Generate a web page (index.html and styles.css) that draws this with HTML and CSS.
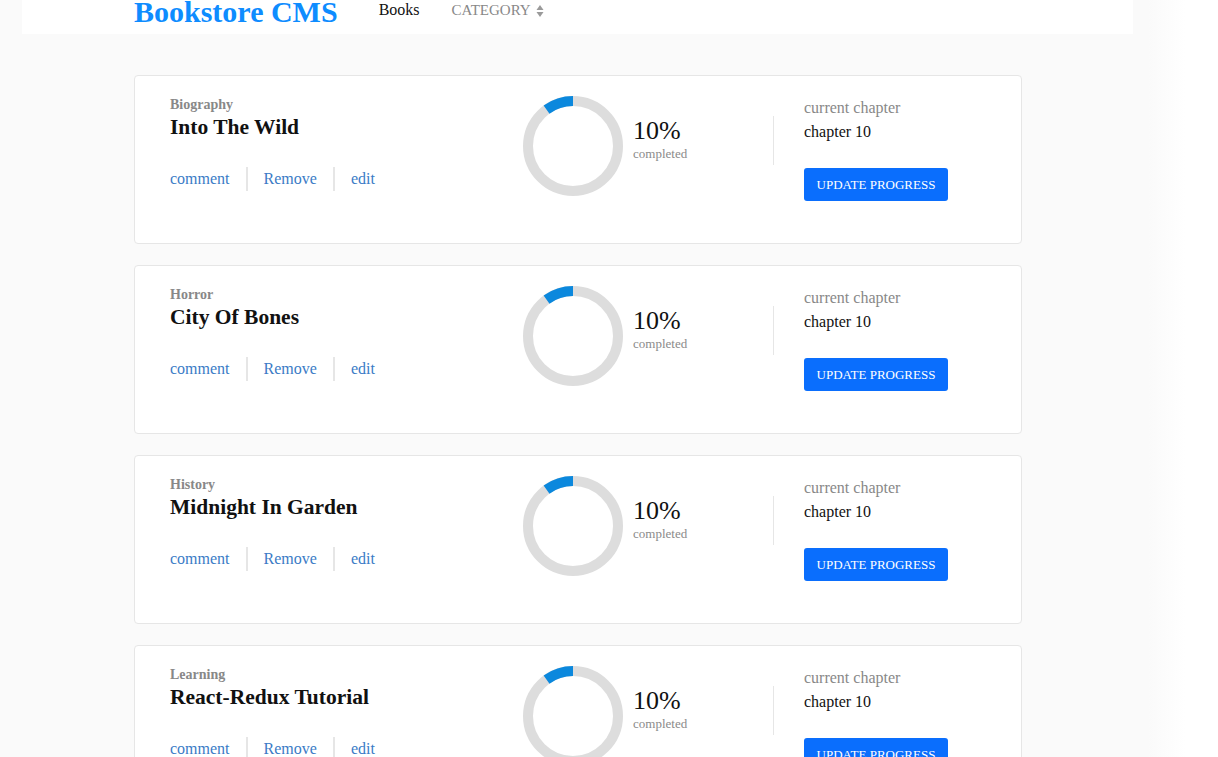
FILE: index.html
```html
<!DOCTYPE html>
<html lang="en">
<head>
<meta charset="utf-8">
<title>Bookstore CMS</title>
<link rel="stylesheet" href="styles.css">
</head>
<body>
<div class="page">
  <header class="header">
    <div class="logo">Bookstore CMS</div>
    <nav class="nav">
      <a class="nav-books">Books</a>
      <span class="nav-category">CATEGORY
        <svg class="sort" width="8" height="14" viewBox="0 0 8 14"><path d="M4 1 L7.5 6 L0.5 6 Z" fill="#9a9a9a"/><path d="M4 13 L7.5 8 L0.5 8 Z" fill="#9a9a9a"/></svg>
      </span>
    </nav>
  </header>

  <main class="books">
    <div class="card">
      <div class="info">
        <div class="category">Biography</div>
        <div class="title">Into The Wild</div>
        <div class="actions"><a class="act first">comment</a><a class="act">Remove</a><a class="act">edit</a></div>
      </div>
      <div class="progress">
        <svg class="ring" width="100" height="100" viewBox="0 0 100 100"><circle cx="50" cy="50" r="45" fill="none" stroke="#dddddd" stroke-width="10"/><path d="M50 5 A45 45 0 0 0 23.55 13.59" fill="none" stroke="#0b88dd" stroke-width="10"/></svg>
        <div class="pct"><div class="pct-num">10%</div><div class="pct-label">completed</div></div>
      </div>
      <div class="divider"></div>
      <div class="chapter">
        <div class="ch-label">current chapter</div>
        <div class="ch-value">chapter 10</div>
        <button class="update">UPDATE PROGRESS</button>
      </div>
    </div>

    <div class="card">
      <div class="info">
        <div class="category">Horror</div>
        <div class="title">City Of Bones</div>
        <div class="actions"><a class="act first">comment</a><a class="act">Remove</a><a class="act">edit</a></div>
      </div>
      <div class="progress">
        <svg class="ring" width="100" height="100" viewBox="0 0 100 100"><circle cx="50" cy="50" r="45" fill="none" stroke="#dddddd" stroke-width="10"/><path d="M50 5 A45 45 0 0 0 23.55 13.59" fill="none" stroke="#0b88dd" stroke-width="10"/></svg>
        <div class="pct"><div class="pct-num">10%</div><div class="pct-label">completed</div></div>
      </div>
      <div class="divider"></div>
      <div class="chapter">
        <div class="ch-label">current chapter</div>
        <div class="ch-value">chapter 10</div>
        <button class="update">UPDATE PROGRESS</button>
      </div>
    </div>

    <div class="card">
      <div class="info">
        <div class="category">History</div>
        <div class="title">Midnight In Garden</div>
        <div class="actions"><a class="act first">comment</a><a class="act">Remove</a><a class="act">edit</a></div>
      </div>
      <div class="progress">
        <svg class="ring" width="100" height="100" viewBox="0 0 100 100"><circle cx="50" cy="50" r="45" fill="none" stroke="#dddddd" stroke-width="10"/><path d="M50 5 A45 45 0 0 0 23.55 13.59" fill="none" stroke="#0b88dd" stroke-width="10"/></svg>
        <div class="pct"><div class="pct-num">10%</div><div class="pct-label">completed</div></div>
      </div>
      <div class="divider"></div>
      <div class="chapter">
        <div class="ch-label">current chapter</div>
        <div class="ch-value">chapter 10</div>
        <button class="update">UPDATE PROGRESS</button>
      </div>
    </div>

    <div class="card">
      <div class="info">
        <div class="category">Learning</div>
        <div class="title">React-Redux Tutorial</div>
        <div class="actions"><a class="act first">comment</a><a class="act">Remove</a><a class="act">edit</a></div>
      </div>
      <div class="progress">
        <svg class="ring" width="100" height="100" viewBox="0 0 100 100"><circle cx="50" cy="50" r="45" fill="none" stroke="#dddddd" stroke-width="10"/><path d="M50 5 A45 45 0 0 0 23.55 13.59" fill="none" stroke="#0b88dd" stroke-width="10"/></svg>
        <div class="pct"><div class="pct-num">10%</div><div class="pct-label">completed</div></div>
      </div>
      <div class="divider"></div>
      <div class="chapter">
        <div class="ch-label">current chapter</div>
        <div class="ch-value">chapter 10</div>
        <button class="update">UPDATE PROGRESS</button>
      </div>
    </div>
  </main>
</div>
</body>
</html>
```
FILE: styles.css
```css
* { box-sizing: border-box; }

html, body {
  margin: 0;
  padding: 0;
  background: #ffffff;
  font-family: "Liberation Serif", "Times New Roman", serif;
}

.page {
  width: 1185px;
  min-height: 757px;
  background: linear-gradient(to right, #fafafa 0, #fafafa 1148px, #ffffff 1185px);
  overflow: hidden;
}

.header {
  margin-left: 22px;
  width: 1111px;
  height: 34px;
  background: #ffffff;
  padding-left: 112px;
  display: flex;
  align-items: flex-start;
}

.logo {
  font-size: 30px;
  line-height: 24px;
  font-weight: bold;
  color: #0e8cff;
  white-space: nowrap;
}

.nav {
  display: flex;
  align-items: flex-start;
  margin-left: 41px;
}

.nav-books {
  font-size: 16px;
  line-height: 20px;
  color: #111111;
}

.nav-category {
  margin-left: 32px;
  font-size: 15px;
  line-height: 20px;
  color: #888888;
  display: flex;
  align-items: flex-start;
}

.sort {
  margin-left: 5px;
  margin-top: 4px;
}

.books {
  padding: 41px 0 0 134px;
}

.card {
  width: 888px;
  height: 169px;
  margin-bottom: 21px;
  background: #ffffff;
  border: 1px solid #e6e6e6;
  border-radius: 4px;
  padding: 19px 35px 0 35px;
  display: flex;
  align-items: flex-start;
}

.info {
  width: 353px;
  flex: none;
  margin-top: 1px;
}

.category {
  font-size: 14px;
  line-height: 17px;
  font-weight: bold;
  color: #888888;
}

.title {
  margin-top: 2px;
  font-size: 21.5px;
  line-height: 25px;
  font-weight: bold;
  color: #111111;
}

.actions {
  margin-top: 27px;
  display: flex;
}

.act {
  font-size: 16px;
  line-height: 24px;
  color: #3a7bc6;
  padding: 0 16px 0 16px;
  border-left: 2px solid #e6e6e6;
}

.act.first {
  padding-left: 0;
  border-left: none;
}

.progress {
  width: 250px;
  flex: none;
  margin-top: 1px;
  display: flex;
  align-items: flex-start;
  gap: 10px;
}

.ring { display: block; flex: none; }

.pct { margin-top: 21px; }

.pct-num {
  font-size: 26px;
  line-height: 28px;
  color: #111111;
}

.pct-label {
  font-size: 13px;
  line-height: 17px;
  color: #8a8a8a;
}

.divider {
  width: 1px;
  height: 49px;
  flex: none;
  margin-top: 21px;
  background: #e6e6e6;
}

.chapter {
  padding-left: 30px;
  margin-top: 1px;
}

.ch-label {
  font-size: 16px;
  line-height: 24px;
  color: #888888;
}

.ch-value {
  font-size: 16px;
  line-height: 24px;
  color: #111111;
}

.update {
  margin-top: 24px;
  width: 144px;
  height: 33px;
  border: none;
  border-radius: 3px;
  background: #0a6efd;
  color: #ffffff;
  font-family: "Liberation Serif", "Times New Roman", serif;
  font-size: 13px;
  padding: 0;
  display: block;
}
```
